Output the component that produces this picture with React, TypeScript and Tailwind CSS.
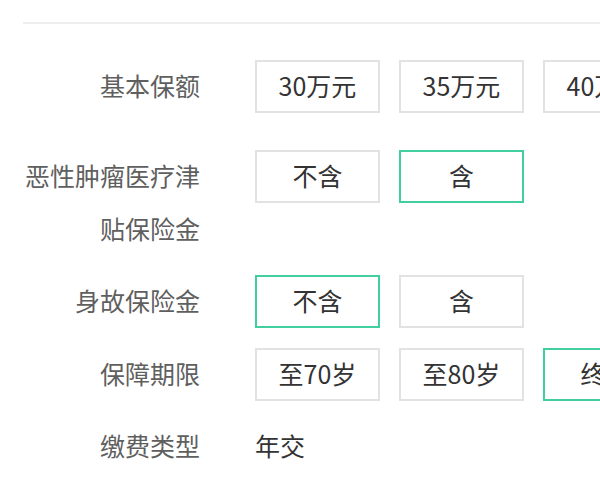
import { useState } from "react";

type Row = {
  label: string[];
  options?: string[];
  value?: string;
  selected?: number;
};

const rows: Row[] = [
  { label: ["基本保额"], options: ["30万元", "35万元", "40万元"], selected: -1 },
  { label: ["恶性肿瘤医疗津", "贴保险金"], options: ["不含", "含"], selected: 1 },
  { label: ["身故保险金"], options: ["不含", "含"], selected: 0 },
  { label: ["保障期限"], options: ["至70岁", "至80岁", "终身"], selected: 2 },
  { label: ["缴费类型"], value: "年交" },
];

// 每行之间的间距（按截图量出来的）
const gaps = ["mt-[36px]", "mt-[37px]", "mt-[20px]", "mt-[20px]", "mt-[19px]"];

const OptionRow = ({ row, className }: { row: Row; className: string }) => {
  const [sel, setSel] = useState(row.selected ?? -1);

  return (
    <div className={`flex items-start ${className}`}>
      <div className="w-[177px] shrink-0 -mt-[1px] text-right text-[25px] leading-[53px] text-[#5f5f5f]">
        {row.label.map((l, i) => (
          <div key={i} className="whitespace-nowrap">
            {l}
          </div>
        ))}
      </div>
      <div className="ml-[55px] flex flex-nowrap gap-[19px]">
        {row.options ? (
          row.options.map((o, i) => (
            <button
              key={o}
              onClick={() => setSel(i)}
              className={`w-[125px] h-[53px] shrink-0 flex items-center justify-center pb-[2px] border-2 bg-white text-[25px] text-[#333333] ${
                i === sel ? "border-[#42cf9e]" : "border-[#e2e2e2]"
              }`}
            >
              {o}
            </button>
          ))
        ) : (
          <span className="-mt-[1px] text-[25px] leading-[53px] text-[#333333]">{row.value}</span>
        )}
      </div>
    </div>
  );
};

export default function App() {
  return (
    <div
      className="w-[600px] h-[493px] overflow-hidden bg-white pt-[22px]"
      style={{ fontFamily: '"Noto Sans CJK SC", "Noto Sans", sans-serif' }}
    >
      <div className="ml-[23px] h-[2px] bg-[#efeded]" />
      <div className="pl-[23px]">
        {rows.map((r, i) => (
          <OptionRow key={i} row={r} className={gaps[i]} />
        ))}
      </div>
    </div>
  );
}
